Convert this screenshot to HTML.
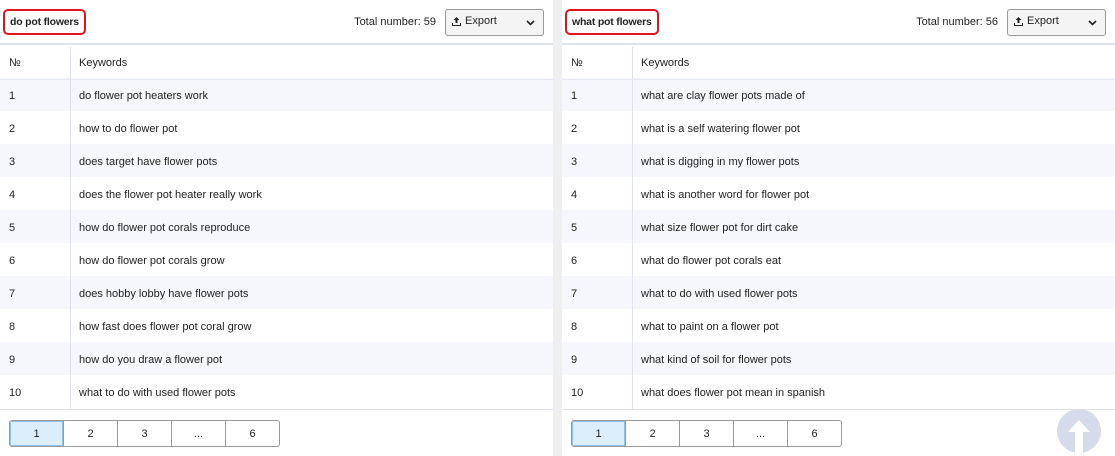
<!DOCTYPE html>
<html><head><meta charset="utf-8"><style>
*{box-sizing:border-box;margin:0;padding:0}
body{width:1115px;height:456px;overflow:hidden;background:#efefef;font-family:"Liberation Sans",sans-serif;font-size:11px;color:#222;position:relative}
.panel{position:absolute;top:0;width:553px;height:456px;background:#fff}
.hdr{height:45px;border-bottom:2px solid #dfe3ee;position:relative}
.tag{position:absolute;left:3px;top:9px;height:26px;border:2px solid #e0141e;border-radius:5px;padding:0 5px;line-height:23px;font-weight:bold;font-size:10.5px;letter-spacing:-0.2px}
.tot{position:absolute;right:117px;top:16px;font-size:11px}
.exp{position:absolute;right:9px;top:9px;width:99px;height:27px;border:1px solid #999;border-radius:3px;background:#f4f4f4;font-size:11px;padding-left:19px;line-height:23px}
.exp svg{position:absolute}
.row{height:33px;position:relative;line-height:36px}
.row.s{background:#f5f7fc}
.row .n{position:absolute;left:9px}
.row .k{position:absolute;left:79px}
.col{position:absolute;left:70px;top:47px;width:1px;height:362px;background:#dfe3ee}
.hl{position:absolute;left:0;right:0;top:79px;height:1px;background:#e6e9f2}
.bot{position:absolute;top:409px;left:0;right:0;border-top:1px solid #dfe3ee}
.pg{position:absolute;top:420px;left:9px;display:flex;border:1px solid #999;border-radius:3px;overflow:hidden}
.pg div{width:54px;height:25px;border-left:1px solid #999;text-align:center;line-height:26px;font-size:11px}
.pg div:first-child{border-left:none;width:53px;background:#dceefc;box-shadow:inset 0 0 0 1px #8fbfe6}
</style></head><body>
<div class="panel" style="left:0">
<div class="hdr"><div class="tag">do pot flowers</div><div class="tot">Total number: 59</div>
<div class="exp"><svg style="left:6px;top:7px" width="9" height="10" viewBox="0 0 9 10"><path d="M4.5 0L1.5 3h2v3h2V3h2zM0 6v3h9V6H8v2H1V6z" fill="#222"/></svg>Export<svg style="right:8px;top:10px" width="9" height="6" viewBox="0 0 9 6"><path d="M1 1l3.5 3.5L8 1" stroke="#222" stroke-width="1.6" fill="none"/></svg></div></div>
<div class="row" style="height:33px"><span class="n">№</span><span class="k">Keywords</span></div>
<div class="row s"><span class="n">1</span><span class="k">do flower pot heaters work</span></div>
<div class="row"><span class="n">2</span><span class="k">how to do flower pot</span></div>
<div class="row s"><span class="n">3</span><span class="k">does target have flower pots</span></div>
<div class="row"><span class="n">4</span><span class="k">does the flower pot heater really work</span></div>
<div class="row s"><span class="n">5</span><span class="k">how do flower pot corals reproduce</span></div>
<div class="row"><span class="n">6</span><span class="k">how do flower pot corals grow</span></div>
<div class="row s"><span class="n">7</span><span class="k">does hobby lobby have flower pots</span></div>
<div class="row"><span class="n">8</span><span class="k">how fast does flower pot coral grow</span></div>
<div class="row s"><span class="n">9</span><span class="k">how do you draw a flower pot</span></div>
<div class="row"><span class="n">10</span><span class="k">what to do with used flower pots</span></div>
<div class="col"></div><div class="hl"></div><div class="bot"></div>
<div class="pg"><div>1</div><div>2</div><div>3</div><div>...</div><div>6</div></div>
</div>
<div class="panel" style="left:562px">
<div class="hdr"><div class="tag">what pot flowers</div><div class="tot">Total number: 56</div>
<div class="exp"><svg style="left:6px;top:7px" width="9" height="10" viewBox="0 0 9 10"><path d="M4.5 0L1.5 3h2v3h2V3h2zM0 6v3h9V6H8v2H1V6z" fill="#222"/></svg>Export<svg style="right:8px;top:10px" width="9" height="6" viewBox="0 0 9 6"><path d="M1 1l3.5 3.5L8 1" stroke="#222" stroke-width="1.6" fill="none"/></svg></div></div>
<div class="row" style="height:33px"><span class="n">№</span><span class="k">Keywords</span></div>
<div class="row s"><span class="n">1</span><span class="k">what are clay flower pots made of</span></div>
<div class="row"><span class="n">2</span><span class="k">what is a self watering flower pot</span></div>
<div class="row s"><span class="n">3</span><span class="k">what is digging in my flower pots</span></div>
<div class="row"><span class="n">4</span><span class="k">what is another word for flower pot</span></div>
<div class="row s"><span class="n">5</span><span class="k">what size flower pot for dirt cake</span></div>
<div class="row"><span class="n">6</span><span class="k">what do flower pot corals eat</span></div>
<div class="row s"><span class="n">7</span><span class="k">what to do with used flower pots</span></div>
<div class="row"><span class="n">8</span><span class="k">what to paint on a flower pot</span></div>
<div class="row s"><span class="n">9</span><span class="k">what kind of soil for flower pots</span></div>
<div class="row"><span class="n">10</span><span class="k">what does flower pot mean in spanish</span></div>
<div class="col"></div><div class="hl"></div><div class="bot"></div>
<div class="pg"><div>1</div><div>2</div><div>3</div><div>...</div><div>6</div></div>
</div>
<svg style="position:absolute;left:1057px;top:409px" width="46" height="47" viewBox="0 0 46 47"><circle cx="22" cy="22" r="22" fill="#d5dbea"/><path d="M22 11L11 23h7v24h8V23h7z" fill="#fff"/></svg>
</body></html>
